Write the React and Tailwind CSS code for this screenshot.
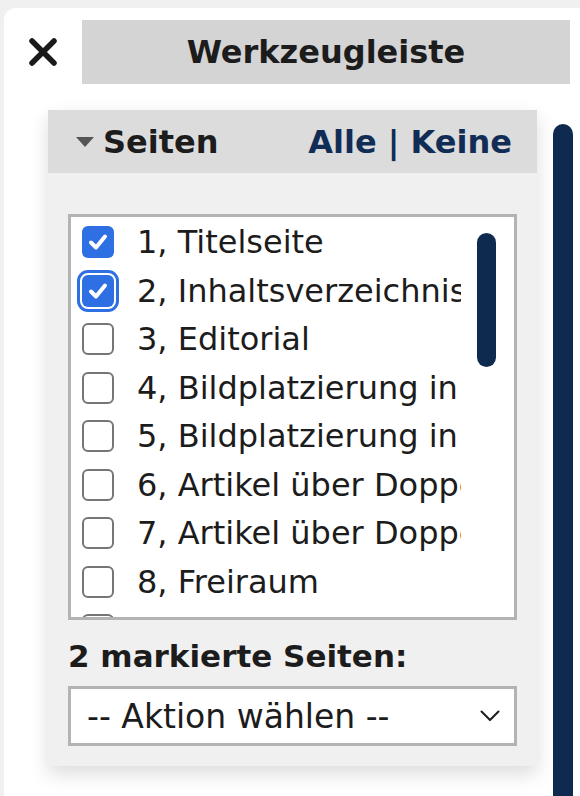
import React from "react";

const pages = [
  { nr: 1, title: "Titelseite", checked: true },
  { nr: 2, title: "Inhaltsverzeichnis", checked: true, focus: true },
  { nr: 3, title: "Editorial" },
  { nr: 4, title: "Bildplatzierung in Rahmen" },
  { nr: 5, title: "Bildplatzierung in Spalten" },
  { nr: 6, title: "Artikel über Doppelseite" },
  { nr: 7, title: "Artikel über Doppelseite 2" },
  { nr: 8, title: "Freiraum" },
  { nr: 9, title: "Rückseite" },
];

function Checkbox({ checked, focus }) {
  if (checked) {
    return (
      <span
        className={
          "flex h-[32px] w-[32px] shrink-0 items-center justify-center rounded-[6px] bg-[#2f6fe4] " +
          (focus ? "outline-[3px] outline-solid outline-offset-[2px] outline-[#2f6fe4]" : "")
        }
      >
        <svg width="22" height="22" viewBox="0 0 22 22">
          <path
            d="M4 11.5 L9 16.5 L18 5.5"
            fill="none"
            stroke="white"
            strokeWidth="4"
            strokeLinecap="round"
            strokeLinejoin="round"
          />
        </svg>
      </span>
    );
  }
  return (
    <span className="h-[32px] w-[32px] shrink-0 rounded-[6px] border-[2.5px] border-[#767676] bg-white" />
  );
}

function PageRow({ page }) {
  return (
    <div className="flex h-[48.5px] items-center gap-[23px]">
      <Checkbox checked={page.checked} focus={page.focus} />
      <span className="whitespace-nowrap text-[32px] leading-none text-[#1c1c1c]">
        {page.nr}, {page.title}
      </span>
    </div>
  );
}

export default function App() {
  return (
    <div
      className="h-screen overflow-hidden bg-[#f0f0f0] pl-[4px] pt-[8px]"
      style={{ fontFamily: '"DejaVu Sans", Verdana, sans-serif' }}
    >
      <div className="h-full rounded-tl-[12px] bg-white pt-[12px]">
        {/* header bar */}
        <div className="flex items-center pl-[24px] pr-[10px]">
          <svg width="30" height="30" viewBox="0 0 30 30" className="shrink-0">
            <path
              d="M4 4 L26 26 M26 4 L4 26"
              stroke="#1a1a1a"
              strokeWidth="5.5"
              strokeLinecap="round"
            />
          </svg>
          <div className="ml-[24px] flex h-[64px] flex-1 items-center justify-center bg-[#d4d4d4]">
            <span className="text-[32px] font-bold text-[#1c1c1c]">Werkzeugleiste</span>
          </div>
        </div>

        <div className="mt-[26px] flex items-start pl-[44px]">
          {/* pages panel */}
          <div className="w-[489px] shrink-0 bg-[#f0f0f0] shadow-[0_8px_18px_rgba(0,0,0,0.14)]">
            <div className="flex h-[63px] items-center justify-between bg-[#dcdcdc] pl-[27px] pr-[25px]">
              <div className="flex items-center gap-[8px]">
                <svg width="20" height="12" viewBox="0 0 20 12">
                  <path d="M1 1 L19 1 L10 11 Z" fill="#555" />
                </svg>
                <span className="text-[32px] font-bold text-[#1c1c1c]">Seiten</span>
              </div>
              <div className="text-[32px] font-bold text-[#112d55]">
                <span>Alle</span> | <span>Keine</span>
              </div>
            </div>

            <div className="px-[20px] pb-[20px] pt-[41px]">
              <div className="flex h-[406px] border-[3px] border-[#b3b3b3] bg-white">
                <div className="flex-1 overflow-hidden pl-[11px] pt-[1px]">
                  {pages.map((p) => (
                    <PageRow key={p.nr} page={p} />
                  ))}
                </div>
                <div className="w-[53px] shrink-0 pl-[16px] pt-[16px]">
                  <div className="h-[134px] w-[19px] rounded-full bg-[#0f2a4f]" />
                </div>
              </div>

              <div className="mt-[17px] text-[31px] font-bold leading-[38px] text-[#1c1c1c]">
                2 markierte Seiten:
              </div>

              <div className="mt-[11px] flex h-[60px] items-center justify-between border-[3px] border-[#b3b3b3] bg-white pl-[16px] pr-[14px]">
                <span className="text-[33px] leading-none text-[#1c1c1c]">-- Aktion wählen --</span>
                <svg width="20" height="12" viewBox="0 0 20 12">
                  <path
                    d="M1.5 1.5 L10 10 L18.5 1.5"
                    fill="none"
                    stroke="#1c1c1c"
                    strokeWidth="2"
                    strokeLinecap="round"
                    strokeLinejoin="round"
                  />
                </svg>
              </div>
            </div>
          </div>

          {/* outer scrollbar */}
          <div className="ml-[16px] mt-[14px] h-[720px] w-[20px] shrink-0 rounded-full bg-[#0f2a4f]" />
        </div>
      </div>
    </div>
  );
}
